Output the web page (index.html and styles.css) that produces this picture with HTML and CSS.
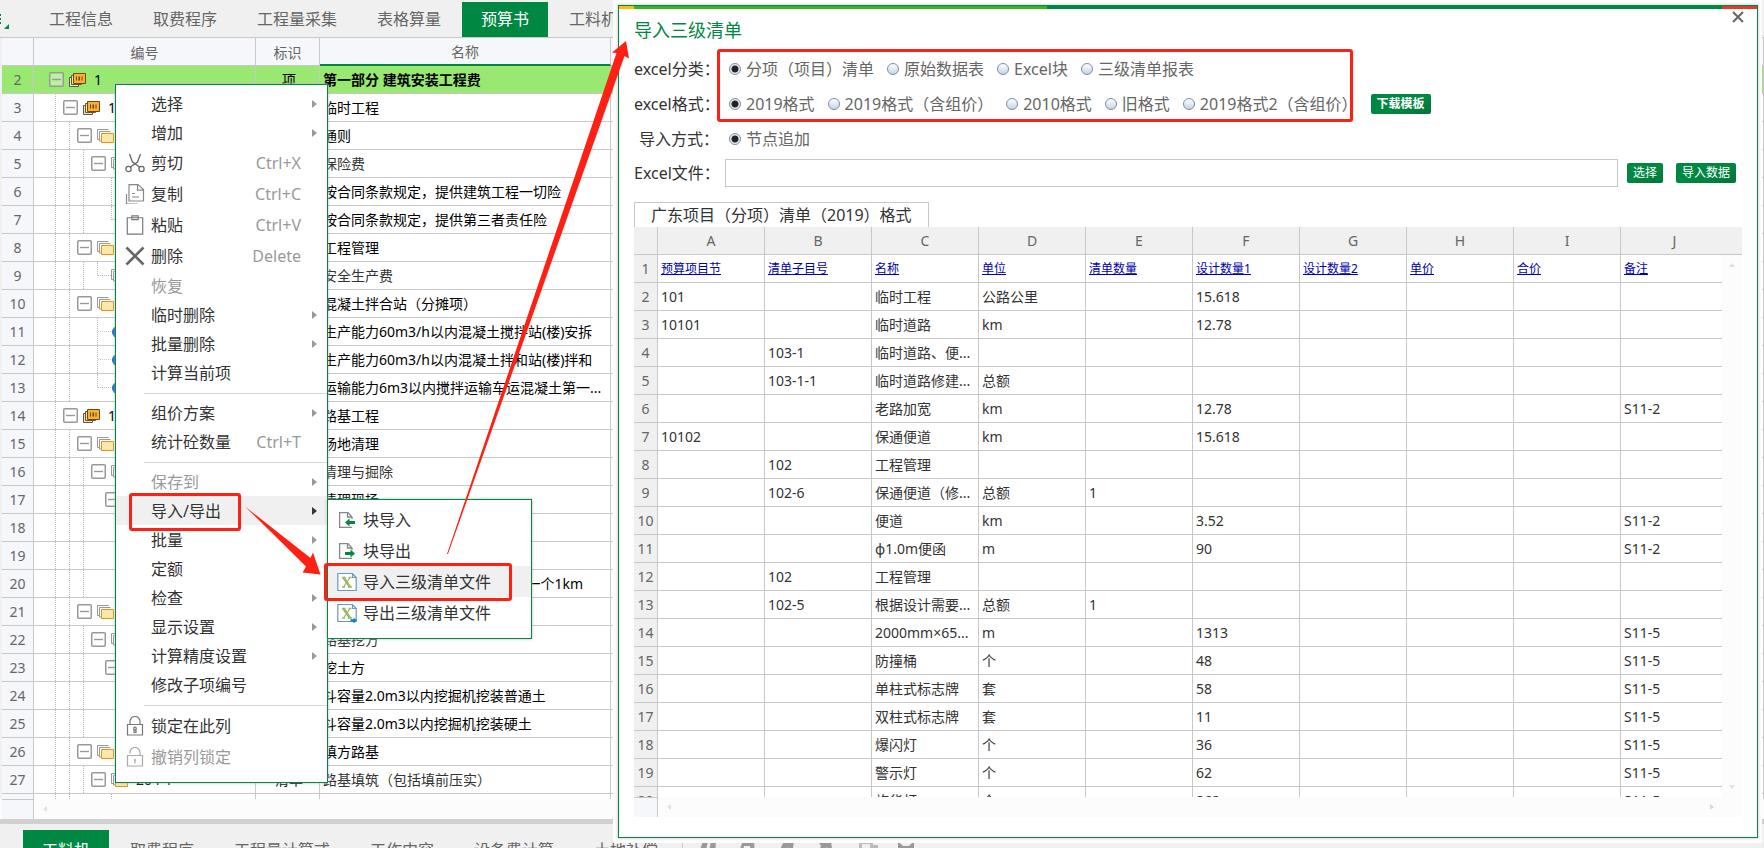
FILE: index.html
```html
<!DOCTYPE html>
<html lang="zh-CN">
<head>
<meta charset="utf-8">
<title>预算书 - 导入三级清单</title>
<link rel="stylesheet" href="styles.css">
</head>
<body>
<svg class="defs" aria-hidden="true">
  <symbol id="minus" viewBox="0 0 15 15"><rect x=".75" y=".75" width="13.5" height="13.5" rx="1" fill="#fff" fill-opacity=".35" stroke="#999" stroke-width="1.5"/><path d="M3 7.5h9" stroke="#999" stroke-width="1.4"/></symbol>
  <symbol id="part" viewBox="0 0 17 14"><path d="M.5 4.500h9v9h-9z" fill="#fbe9a8" stroke="#555"/><path d="M2.500 2.500h10v9h-10z" fill="#fbe9a8" stroke="#555"/><path d="M4.500.5h12v10h-12z" fill="#fbb034" stroke="#6a4a14"/><path d="M7 3.500h1v4h-1zM9.500 3.500h1.500v4h-1.500zM12.500 3.500h1v4h-1z" fill="#6a4410"/></symbol>
  <symbol id="folder" viewBox="0 0 17 14"><path d="M.5 10.500v-10h11M2.500 12v-9.500h11" fill="none" stroke="#999"/><path d="M.5 10.500h2M2.500 12h2" stroke="#999"/><path d="M4.500 4.500h12v9h-12z" fill="#f8e8ae" stroke="#e8920c"/></symbol>
  <symbol id="dot" viewBox="0 0 17 14"><circle cx="7" cy="7" r="6" fill="#0b62d6"/></symbol>
</svg>

<div class="app">
  <nav class="tabs">
    <svg class="mark" viewBox="0 0 10 37"><path d="M9 24v5H4z" fill="#008842"/><path d="M0 15h1M0 19h1M0 23h1" stroke="#008842" stroke-width="2"/></svg>
    <a href="#">工程信息</a><a href="#">取费程序</a><a href="#">工程量采集</a><a href="#">表格算量</a><a href="#" class="on">预算书</a><a href="#">工料机</a>
  </nav>

  <div class="sheet">
    <table class="budget">
      <colgroup><col class="c-no"><col class="c-code"><col class="c-mark"><col class="c-name"><col></colgroup>
      <thead><tr><th></th><th>编号</th><th>标识</th><th class="current">名称</th><th></th></tr></thead>
      <tbody>
        <tr class="sel"><th>2</th><td><div class="tree"><svg class="box"><use href="#minus"/></svg><svg class="ico"><use href="#part"/></svg>1</div></td><td class="mid">项</td><td><b>第一部分 建筑安装工程费</b></td><td></td></tr>
        <tr><th>3</th><td><div class="tree"><i></i><svg class="box"><use href="#minus"/></svg><svg class="ico"><use href="#part"/></svg>101</div></td><td></td><td>临时工程</td><td></td></tr>
        <tr><th>4</th><td><div class="tree"><i></i><i></i><svg class="box"><use href="#minus"/></svg><svg class="ico"><use href="#folder"/></svg></div></td><td></td><td>通则</td><td></td></tr>
        <tr><th>5</th><td><div class="tree"><i></i><i></i><i></i><svg class="box"><use href="#minus"/></svg><svg class="ico"><use href="#folder"/></svg></div></td><td></td><td class="soft">保险费</td><td></td></tr>
        <tr><th>6</th><td><div class="tree"><i></i><i></i><i></i><i class="gap"></i><i></i></div></td><td></td><td>按合同条款规定，提供建筑工程一切险</td><td></td></tr>
        <tr><th>7</th><td><div class="tree"><i></i><i></i><i></i><i class="gap"></i><i class="end"></i></div></td><td></td><td>按合同条款规定，提供第三者责任险</td><td></td></tr>
        <tr><th>8</th><td><div class="tree"><i></i><i></i><svg class="box"><use href="#minus"/></svg><svg class="ico"><use href="#folder"/></svg></div></td><td></td><td>工程管理</td><td></td></tr>
        <tr><th>9</th><td><div class="tree"><i></i><i></i><i></i><i class="end"></i><svg class="ico leaf"><use href="#folder"/></svg></div></td><td></td><td class="soft">安全生产费</td><td></td></tr>
        <tr><th>10</th><td><div class="tree"><i></i><i></i><svg class="box"><use href="#minus"/></svg><svg class="ico"><use href="#folder"/></svg></div></td><td></td><td>混凝土拌合站（分摊项）</td><td></td></tr>
        <tr><th>11</th><td><div class="tree"><i></i><i></i><i class="gap"></i><i class="fork"></i><svg class="ico leaf"><use href="#dot"/></svg></div></td><td></td><td>生产能力60m3/h以内混凝土搅拌站(楼)安拆</td><td></td></tr>
        <tr><th>12</th><td><div class="tree"><i></i><i></i><i class="gap"></i><i class="fork"></i><svg class="ico leaf"><use href="#dot"/></svg></div></td><td></td><td>生产能力60m3/h以内混凝土拌和站(楼)拌和</td><td></td></tr>
        <tr><th>13</th><td><div class="tree"><i></i><i></i><i class="gap"></i><i class="end"></i><svg class="ico leaf"><use href="#dot"/></svg></div></td><td></td><td>运输能力6m3以内搅拌运输车运混凝土第一...</td><td></td></tr>
        <tr><th>14</th><td><div class="tree"><i></i><svg class="box"><use href="#minus"/></svg><svg class="ico"><use href="#part"/></svg>102</div></td><td></td><td>路基工程</td><td></td></tr>
        <tr><th>15</th><td><div class="tree"><i></i><i></i><svg class="box"><use href="#minus"/></svg><svg class="ico"><use href="#folder"/></svg></div></td><td></td><td>场地清理</td><td></td></tr>
        <tr><th>16</th><td><div class="tree"><i></i><i></i><i></i><svg class="box"><use href="#minus"/></svg><svg class="ico"><use href="#folder"/></svg></div></td><td></td><td class="soft">清理与掘除</td><td></td></tr>
        <tr><th>17</th><td><div class="tree"><i></i><i></i><i></i><i class="gap"></i><svg class="box"><use href="#minus"/></svg></div></td><td></td><td>清理现场</td><td></td></tr>
        <tr><th>18</th><td><div class="tree"><i></i><i></i><i></i></div></td><td></td><td></td><td></td></tr>
        <tr><th>19</th><td><div class="tree"><i></i><i></i><i></i></div></td><td></td><td></td><td></td></tr>
        <tr><th>20</th><td><div class="tree"><i></i><i></i><i></i></div></td><td></td><td class="tail">一个1km</td><td></td></tr>
        <tr><th>21</th><td><div class="tree"><i></i><i></i><svg class="box"><use href="#minus"/></svg><svg class="ico"><use href="#folder"/></svg></div></td><td></td><td></td><td></td></tr>
        <tr><th>22</th><td><div class="tree"><i></i><i></i><i></i><svg class="box"><use href="#minus"/></svg><svg class="ico"><use href="#folder"/></svg></div></td><td></td><td class="soft">路基挖方</td><td></td></tr>
        <tr><th>23</th><td><div class="tree"><i></i><i></i><i></i><i class="gap"></i><svg class="box"><use href="#minus"/></svg></div></td><td></td><td>挖土方</td><td></td></tr>
        <tr><th>24</th><td><div class="tree"><i></i><i></i><i></i></div></td><td></td><td>斗容量2.0m3以内挖掘机挖装普通土</td><td></td></tr>
        <tr><th>25</th><td><div class="tree"><i></i><i></i><i></i></div></td><td></td><td>斗容量2.0m3以内挖掘机挖装硬土</td><td></td></tr>
        <tr><th>26</th><td><div class="tree"><i></i><i></i><svg class="box"><use href="#minus"/></svg><svg class="ico"><use href="#folder"/></svg></div></td><td></td><td>填方路基</td><td></td></tr>
        <tr><th>27</th><td><div class="tree"><i></i><i></i><i></i><svg class="box"><use href="#minus"/></svg><svg class="ico"><use href="#folder"/></svg>204-1</div></td><td class="mid">清单</td><td class="soft">路基填筑（包括填前压实）</td><td></td></tr>
        <tr><th></th><td><div class="tree"><i></i><i></i><i class="gap"></i><i class="gap"></i><i></i></div></td><td></td><td></td><td></td></tr>
      </tbody>
    </table>
  </div>
  <div class="hscroll"><div class="corner"></div><svg viewBox="0 0 4 6"><path d="M4 0v6L0 3z" fill="#e0e1e8"/></svg></div>
  <div class="splitter"></div>
  <nav class="tabs bottom">
    <a href="#" class="on">工料机</a><a href="#">取费程序</a><a href="#">工程量计算式</a><a href="#">工作内容</a><a href="#">设备费计算</a><a href="#">土地补偿</a>
    <svg class="tools" viewBox="0 0 240 18" fill="#999">
      <path d="M.5 0v18" stroke="#ccc"/>
      <path d="M16 18l5-15h5l-3 15zM26 18l3-15h5l-1 15z"/><path d="M55 18l6-15h11l1 15h-4l-1-10h-6l-2 10z"/><path d="M95 18l7-15h10l-2 15h-4v-9l-5 9z"/><path d="M136 3h13l2 15h-5l-1-9-6 9h-4l4-10z"/><path d="M177 3h14v4h5v11h-14v-5h-5z" fill="#bbb"/><path d="M180 6h8v4h-8z" fill="#f0f0f0"/><path d="M216 3l5 5h6l5-5v15h-16z"/>
    </svg>
  </nav>
</div>

<div class="stage">
  <section class="dialog" aria-labelledby="dlg-title">
    <div class="stripe"><i class="y"></i><i class="l"></i><i class="d"></i><i class="r"></i></div>
    <button class="close" aria-label="关闭"><svg viewBox="0 0 12 12"><path d="M1 1l10 10M11 1L1 11" stroke="#666" stroke-width="2"/></svg></button>
    <h1 id="dlg-title">导入三级清单</h1>
    <div class="field"><span class="cap">excel分类：</span>
      <label><input type="radio" name="kind" checked>分项（项目）清单</label><label><input type="radio" name="kind">原始数据表</label><label><input type="radio" name="kind">Excel块</label><label><input type="radio" name="kind">三级清单报表</label>
    </div>
    <div class="field"><span class="cap">excel格式：</span>
      <label><input type="radio" name="format" checked>2019格式</label><label><input type="radio" name="format">2019格式（含组价）</label><label><input type="radio" name="format">2010格式</label><label><input type="radio" name="format">旧格式</label><label><input type="radio" name="format">2019格式2（含组价）</label>
      <button class="btn strong">下载模板</button>
    </div>
    <div class="field"><span class="cap in">导入方式：</span>
      <label><input type="radio" name="mode" checked>节点追加</label>
    </div>
    <div class="field file"><label class="cap" for="xls">Excel文件：</label><input type="text" id="xls"><button class="btn">选择</button><button class="btn">导入数据</button></div>
    <div class="sheet-tab">广东项目（分项）清单（2019）格式</div>
    <div class="preview">
      <table class="xl head">
        <colgroup><col class="x-no"><col><col><col><col><col><col><col><col><col><col class="x-last"></colgroup>
        <thead><tr><th></th><th>A</th><th>B</th><th>C</th><th>D</th><th>E</th><th>F</th><th>G</th><th>H</th><th>I</th><th><span>J</span></th></tr></thead>
      </table>
      <div class="view">
        <div class="rows">
          <table class="xl">
            <colgroup><col class="x-no"><col><col><col><col><col><col><col><col><col><col class="x-last"></colgroup>
            <tbody>
            <tr class="links"><th>1</th><td><a href="#">预算项目节</a></td><td><a href="#">清单子目号</a></td><td><a href="#">名称</a></td><td><a href="#">单位</a></td><td><a href="#">清单数量</a></td><td><a href="#">设计数量1</a></td><td><a href="#">设计数量2</a></td><td><a href="#">单价</a></td><td><a href="#">合价</a></td><td><a href="#">备注</a></td></tr>
            <tr><th>2</th><td>101</td><td></td><td>临时工程</td><td>公路公里</td><td></td><td>15.618</td><td></td><td></td><td></td><td></td></tr>
            <tr><th>3</th><td>10101</td><td></td><td>临时道路</td><td>km</td><td></td><td>12.78</td><td></td><td></td><td></td><td></td></tr>
            <tr><th>4</th><td></td><td>103-1</td><td>临时道路、便...</td><td></td><td></td><td></td><td></td><td></td><td></td><td></td></tr>
            <tr><th>5</th><td></td><td>103-1-1</td><td>临时道路修建...</td><td>总额</td><td></td><td></td><td></td><td></td><td></td><td></td></tr>
            <tr><th>6</th><td></td><td></td><td>老路加宽</td><td>km</td><td></td><td>12.78</td><td></td><td></td><td></td><td>S11-2</td></tr>
            <tr><th>7</th><td>10102</td><td></td><td>保通便道</td><td>km</td><td></td><td>15.618</td><td></td><td></td><td></td><td></td></tr>
            <tr><th>8</th><td></td><td>102</td><td>工程管理</td><td></td><td></td><td></td><td></td><td></td><td></td><td></td></tr>
            <tr><th>9</th><td></td><td>102-6</td><td>保通便道（修...</td><td>总额</td><td>1</td><td></td><td></td><td></td><td></td><td></td></tr>
            <tr><th>10</th><td></td><td></td><td>便道</td><td>km</td><td></td><td>3.52</td><td></td><td></td><td></td><td>S11-2</td></tr>
            <tr><th>11</th><td></td><td></td><td>φ1.0m便函</td><td>m</td><td></td><td>90</td><td></td><td></td><td></td><td>S11-2</td></tr>
            <tr><th>12</th><td></td><td>102</td><td>工程管理</td><td></td><td></td><td></td><td></td><td></td><td></td><td></td></tr>
            <tr><th>13</th><td></td><td>102-5</td><td>根据设计需要...</td><td>总额</td><td>1</td><td></td><td></td><td></td><td></td><td></td></tr>
            <tr><th>14</th><td></td><td></td><td>2000mm×65...</td><td>m</td><td></td><td>1313</td><td></td><td></td><td></td><td>S11-5</td></tr>
            <tr><th>15</th><td></td><td></td><td>防撞桶</td><td>个</td><td></td><td>48</td><td></td><td></td><td></td><td>S11-5</td></tr>
            <tr><th>16</th><td></td><td></td><td>单柱式标志牌</td><td>套</td><td></td><td>58</td><td></td><td></td><td></td><td>S11-5</td></tr>
            <tr><th>17</th><td></td><td></td><td>双柱式标志牌</td><td>套</td><td></td><td>11</td><td></td><td></td><td></td><td>S11-5</td></tr>
            <tr><th>18</th><td></td><td></td><td>爆闪灯</td><td>个</td><td></td><td>36</td><td></td><td></td><td></td><td>S11-5</td></tr>
            <tr><th>19</th><td></td><td></td><td>警示灯</td><td>个</td><td></td><td>62</td><td></td><td></td><td></td><td>S11-5</td></tr>
            <tr><th>20</th><td></td><td></td><td>施华灯</td><td>个</td><td></td><td>862</td><td></td><td></td><td></td><td>S11-5</td></tr>
            </tbody>
          </table>
        </div>
        <div class="vbar"><svg viewBox="0 0 6 4"><path d="M0 4h6L3 0z" fill="#e0e1e8"/></svg><svg viewBox="0 0 6 4"><path d="M0 0h6L3 4z" fill="#e0e1e8"/></svg></div>
      </div>
      <div class="hbar"><div class="corner"></div><svg viewBox="0 0 4 6"><path d="M4 0v6L0 3z" fill="#e0e1e8"/></svg><svg viewBox="0 0 4 6"><path d="M0 0v6l4-3z" fill="#d5d7e0"/></svg></div>
    </div>
  </section>
</div>

<menu class="menu main">
  <li><button class="sub">选择</button></li>
  <li><button class="sub">增加</button></li>
  <li><button class="tall"><svg viewBox="0 0 20 20" fill="none" stroke="#666" stroke-width="1.3"><circle cx="3.500" cy="16" r="2.600"/><circle cx="16.500" cy="16" r="2.600"/><path d="M4.500 1l3 8 7.500 5.200M15.500 1l-3 8L5 14.200"/></svg>剪切<kbd>Ctrl+X</kbd></button></li>
  <li><button class="tall"><svg viewBox="0 0 20 20" fill="none" stroke="#888" stroke-width="1.200"><path d="M4 .6h9l5.500 5V17H4zM12.500.6v5.500h6M1.500 10v10h11M7 9.500h3M7 13h7"/></svg>复制<kbd>Ctrl+C</kbd></button></li>
  <li><button class="tall"><svg viewBox="0 0 20 22" fill="none" stroke="#777" stroke-width="1.300"><path d="M1.500 3h17v18h-17zM6.500 1h7v4h-7z" fill="#fff"/></svg>粘贴<kbd>Ctrl+V</kbd></button></li>
  <li><button class="tall"><svg viewBox="0 0 20 20" fill="none" stroke="#666" stroke-width="2.600"><path d="M1.500 1.500l17 17M18.500 1.500l-17 17"/></svg>删除<kbd>Delete</kbd></button></li>
  <li><button disabled>恢复</button></li>
  <li><button class="sub">临时删除</button></li>
  <li><button class="sub">批量删除</button></li>
  <li><button>计算当前项</button></li>
  <li class="sep"></li>
  <li><button class="sub">组价方案</button></li>
  <li><button>统计砼数量<kbd>Ctrl+T</kbd></button></li>
  <li class="sep"></li>
  <li><button class="sub" disabled>保存到</button></li>
  <li><button class="sub hover">导入/导出</button></li>
  <li><button class="sub">批量</button></li>
  <li><button>定额</button></li>
  <li><button class="sub">检查</button></li>
  <li><button class="sub">显示设置</button></li>
  <li><button class="sub">计算精度设置</button></li>
  <li><button>修改子项编号</button></li>
  <li class="sep"></li>
  <li><button class="tall"><svg viewBox="0 0 20 20" fill="none" stroke="#777" stroke-width="1.200"><path d="M2.500 8.500h15v10.500h-15zM5 8.500V5.500a5 5 0 0 1 10 0v3"/><circle cx="10" cy="12.500" r="1.300"/><path d="M9 14h2v2.500h-2z"/></svg>锁定在此列</button></li>
  <li><button class="tall" disabled><svg viewBox="0 0 20 20" fill="none" stroke="#aaa" stroke-width="1.200"><path d="M2.500 8.500h15v10.500h-15zM5 6.500V5.500a5 5 0 0 1 10 0v3M10 12v4.500M9 13h2"/></svg>撤销列锁定</button></li>
</menu>

<menu class="menu second">
  <li><button class="tall"><svg viewBox="0 0 20 20"><path d="M15 17.400H2.600V2.600h8.400l4 4.400v2M10.500 2.600V7H15" fill="none" stroke="#888" stroke-width="1.300"/><path d="M8 12.500l4.500-4v2.500h5.500v3h-5.500v2.500z" fill="#008842"/></svg>块导入</button></li>
  <li><button class="tall"><svg viewBox="0 0 20 20"><path d="M15 17.400H2.600V2.600h8.400l4 4.400v2M10.500 2.600V7H15" fill="none" stroke="#888" stroke-width="1.300"/><path d="M18 12.500l-4.500-4v2.500H8v3h5.500v2.500z" fill="#008842"/></svg>块导出</button></li>
  <li><button class="tall hover"><svg viewBox="0 0 20 20"><path d="M.8 1.500h14.700l3.700 4v13H.8zM15.500 1.500v4h3.700" fill="#fff" stroke="#6f97bd" stroke-width="1.200"/><path d="M5 5.500h3.500M11.500 5.500h3M5 15h3M11 15h4M13 5.500L6.500 15" stroke="#9bb86a" stroke-width="1.300"/><path d="M6.500 5.500L13 15" stroke="#9bb86a" stroke-width="2.600"/></svg>导入三级清单文件</button></li>
  <li><button class="tall"><svg viewBox="0 0 20 20"><path d="M.8 1.500h14.700l3.700 4v13H.8zM15.500 1.500v4h3.700" fill="#fff" stroke="#6f97bd" stroke-width="1.200"/><path d="M5 5.500h3.500M11.500 5.500h3M5 15h3M11 15h4M13 5.500L6.500 15" stroke="#9bb86a" stroke-width="1.300"/><path d="M6.500 5.500L13 15" stroke="#9bb86a" stroke-width="2.600"/><path d="M20 17.500l-3.500-3v1.800h-3v2.500h3V20.500z" fill="#0a84d8"/></svg>导出三级清单文件</button></li>
</menu>

<div class="callout one"></div>
<div class="callout two"></div>
<div class="callout three"></div>
<svg class="arrows" width="640" height="600" viewBox="0 0 640 600" fill="#ff2013">
  <path d="M245 506.500L310.500 558 313 552.500 320.500 574.500 302.600 572.600 306 566.500z"/>
  <path d="M447 554L616.500 53 612 52.500 626 41 629 58.500 624.500 56 448 554z"/>
</svg>
</body>
</html>
```
FILE: styles.css
```css
* { box-sizing: border-box; }
body {
  margin: 0;
  height: 100vh;
  position: relative;
  overflow: hidden;
  background: #f0f0f0;
  color: #333;
  font-family: "Noto Sans", "Noto Sans CJK SC", sans-serif;
  font-size: 14px;
}
button, input, kbd { font-family: inherit; }
button { border: 0; padding: 0; background: none; cursor: pointer; }
table { border-collapse: separate; border-spacing: 0; table-layout: fixed; width: 100%; }
.defs { position: absolute; width: 0; height: 0; }

/* main window */
.app { height: 100%; display: flex; flex-direction: column; }
.tabs {
  flex: none;
  display: flex;
  gap: 2px;
  height: 38px;
  padding-top: 2px;
  border-bottom: 1px solid #c8c8c8;
  overflow: hidden;
}
.tabs a { padding: 0 19px; font-size: 16px; line-height: 34px; white-space: nowrap; color: #666; text-decoration: none; }
.tabs .on { background: #008842; color: #fff; }
.mark { width: 10px; height: 37px; margin: -2px 18px 0 0; }
.bottom { height: 24px; padding: 6px 0 0 23px; border: 0; }
.bottom a { line-height: 40px; height: 40px; }
.tools { width: 240px; height: 18px; margin: 8px 0 0 3px; }

.sheet { flex: 1; min-height: 0; overflow: hidden; padding-left: 2px; }
.budget { background: #fff; color: #000; }
.c-no { width: 32px; }
.c-code { width: 222px; }
.c-mark { width: 64px; }
.c-name { width: 291px; }
.budget th, .budget td { height: 28px; padding: 0; border: 0 solid #c8c8c8; border-width: 0 1px 1px 0; line-height: 20px; }
.budget th { background: #f6f7fa; color: #666; font-weight: 400; }
.budget thead th { padding-top: 2px; }
.budget .current { border-bottom: 2px solid #008842; }
.budget td { padding-left: 3px; white-space: nowrap; overflow: hidden; }
.budget td:nth-child(2) { padding-left: 21px; }
.budget .mid { text-align: center; }
.budget .soft { color: #333; }
.budget td.tail { text-align: right; padding-right: 27px; }
.budget .sel th, .budget .sel td { background: #98e872; }

.tree { display: flex; align-items: center; height: 27px; }
.tree i { flex: none; width: 14px; height: 27px; border-left: 1px dotted #bbb; }
.tree i.gap { border-color: transparent; }
.tree i.end { height: 14px; align-self: flex-start; border-bottom: 1px dotted #bbb; }
.tree i.fork { background: linear-gradient(90deg, #ccc 50%, transparent 50%) 0 13px / 2px 1px repeat-x; }
.box { flex: none; width: 15px; height: 15px; margin-left: -6px; }
.ico { flex: none; width: 17px; height: 14px; margin: 0 8px 0 5px; }
.ico.leaf { margin-left: 0; }

.hscroll, .hbar { flex: none; display: flex; align-items: center; height: 20px; background: #fcfcfc; }
.hscroll { padding-left: 2px; }
.hscroll svg, .hbar svg { width: 4px; height: 6px; margin: 0 9px; }
.corner { width: 32px; height: 20px; background: #f6f7fa; border: solid #c8c8c8; border-width: 1px 1px 0 0; }
.splitter { flex: none; height: 5px; background: #d0d0d0; }

/* import dialog */
.stage { position: absolute; left: 613px; right: 2px; top: 0; bottom: 5px; padding: 5px 4px 5px 5px; background: #fdfdfd; }
.dialog {
  position: relative;
  height: 100%;
  display: flex;
  flex-direction: column;
  background: #fff;
  border: 1px solid #008842;
  box-shadow: 0 0 2px 1px #ddd;
}
.stripe { flex: none; display: flex; height: 3px; }
.stripe i { height: 3px; }
.stripe .y { width: 15px; background: #ffc000; }
.stripe .l { flex: 413; background: #3bb424; }
.stripe .d { flex: 674; background: #008842; }
.stripe .r { width: 35px; background: #e33b2e; }
.close { position: absolute; right: 13px; top: 5px; width: 12px; height: 12px; }
.close svg { display: block; width: 12px; height: 12px; }
.dialog h1 { margin: 9px 0; padding-left: 15px; font-size: 18px; line-height: 24px; font-weight: 400; color: #008842; }
.field { flex: none; display: flex; align-items: center; height: 35px; padding: 0 21px 0 15px; font-size: 16px; line-height: 24px; white-space: nowrap; color: #666; }
.cap { flex: none; width: 95px; color: #333; }
.cap.in { padding-left: 5px; }
.field > label:not(.cap) { display: flex; align-items: center; margin-right: 13px; }
input[type=radio] {
  appearance: none;
  width: 12px;
  height: 12px;
  margin: 0 5px 0 0;
  border: 1px solid #7d8ca3;
  border-radius: 50%;
  background: linear-gradient(#fff, #c3d5e8);
}
input[type=radio]:checked { background: radial-gradient(circle, #222 3px, #e6edf5 4px); }
.btn { flex: none; height: 20px; padding: 0 6px; border-radius: 2px; background: linear-gradient(160deg, #008842 50%, #00753a); color: #fff; font-size: 12px; line-height: 20px; }
.strong { font-weight: 700; }
.file { height: 33px; }
.file .cap { width: 91px; }
.file input { flex: 1; min-width: 0; height: 28px; border: 1px solid #c8c8c8; background: #fff; }
.file .btn { margin-left: 13px; }
.file .btn:first-of-type { margin-left: 9px; }
.sheet-tab { flex: none; align-self: flex-start; height: 25px; margin: 13px 0 0 15px; padding: 0 16px 0 16px; border: 1px solid #c8c8c8; border-bottom: 0; font-size: 16px; line-height: 24px; }

.preview { flex: 1; min-height: 0; display: flex; flex-direction: column; margin: 0 15px 20px 15px; }
.xl col { width: 107px; }
.xl .x-no { width: 24px; }
.xl .x-last { width: auto; }
.xl th, .xl td { height: 28px; padding: 0; border: 0 solid #c8c8c8; border-width: 0 1px 1px 0; line-height: 20px; }
.xl th { background: #f0f0f0; color: #666; font-weight: 400; text-align: center; }
.xl td { padding: 0 3px; overflow: hidden; white-space: nowrap; }
.xl th:last-child, .xl td:last-child { border-right: 0; }
.xl th:last-child span { display: block; width: 107px; }
.xl a { font-size: 12px; color: #00a; }
.head { flex: none; }
.view { flex: 1; min-height: 0; display: flex; }
.rows { flex: 1; min-width: 0; overflow: hidden; }
.vbar { flex: none; width: 20px; display: flex; flex-direction: column; align-items: center; justify-content: space-between; padding: 8px 0; background: #fcfcfc; }
.vbar svg { width: 6px; height: 4px; }
.hbar .corner { width: 24px; }
.hbar svg:last-child { margin: 0 28px 0 auto; }

/* context menus */
.menu { position: absolute; margin: 0; padding: 4px 0 10px; list-style: none; background: #fff; border: 1px solid #008842; box-shadow: 0 0 3px #bbb; }
.main { left: 115px; top: 84px; width: 213px; }
.second { left: 327px; top: 499px; width: 205px; }
.menu button { position: relative; display: flex; align-items: center; width: 100%; height: 29px; padding: 0 26px 0 35px; font-size: 16px; line-height: 24px; color: #333; white-space: nowrap; }
.menu button.tall { height: 31px; padding-left: 9px; }
.menu button:disabled { color: #999; }
.menu svg { flex: none; width: 20px; height: 20px; margin-right: 6px; }
.menu kbd { margin-left: auto; color: #999; }
.menu .hover { background: #f0f0f0; }
.menu .sub::after { content: ""; position: absolute; right: 10px; border: solid transparent; border-width: 4px 0 4px 5px; border-left-color: #999; }
.menu .sub.hover::after { border-left-color: #333; }
.sep { height: 1px; margin: 6px 0 4px 28px; background: #d8d8d8; }

/* annotations */
.callout { position: absolute; border: 3px solid #ff2013; border-radius: 3px; }
.one { left: 129px; top: 493px; width: 112px; height: 38px; }
.two { left: 324px; top: 563px; width: 188px; height: 38px; }
.three { left: 717px; top: 49px; width: 636px; height: 73px; }
.arrows { position: absolute; left: 0; top: 0; pointer-events: none; }
```
